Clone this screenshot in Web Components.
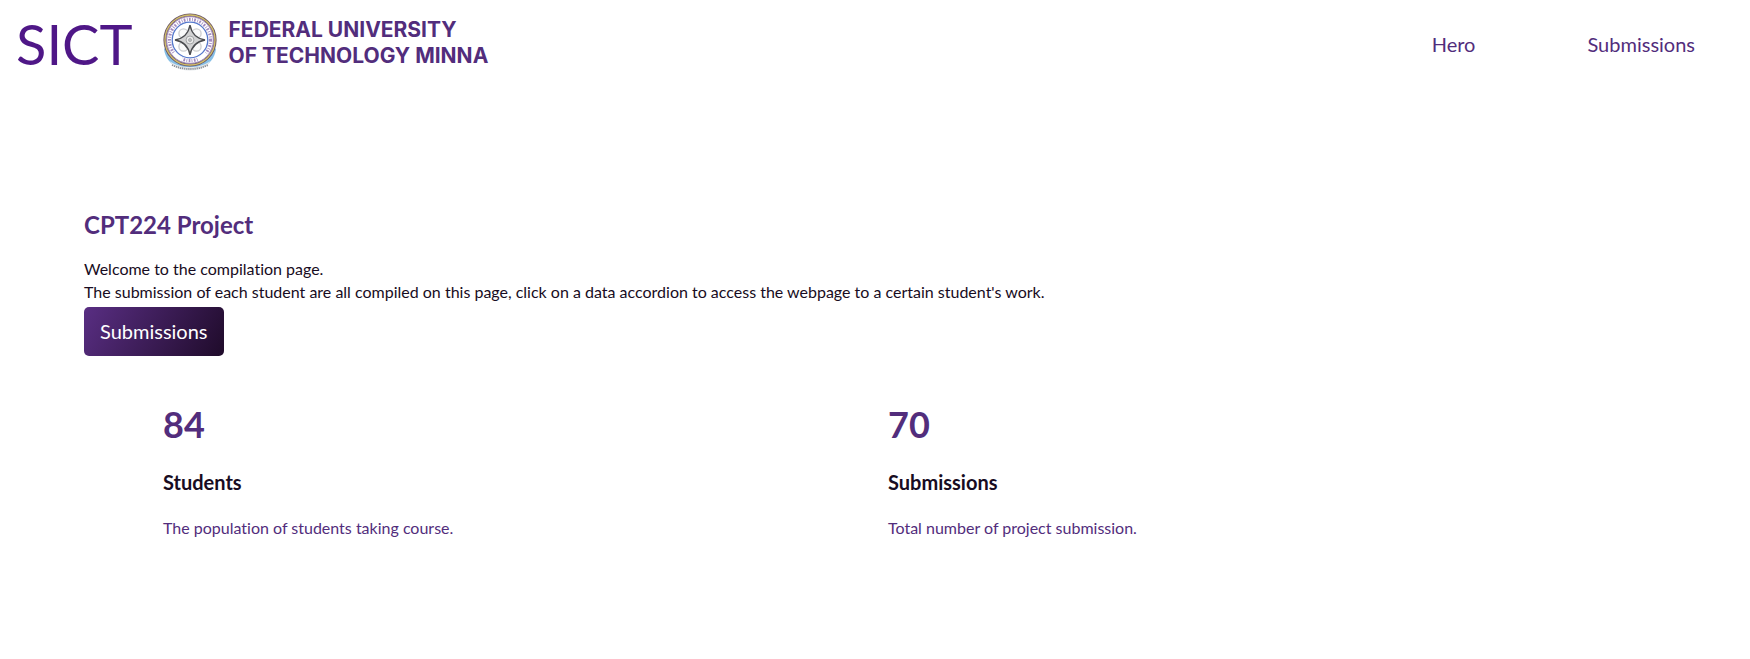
<!DOCTYPE html>
<html lang="en">
<head>
<meta charset="utf-8">
<meta name="viewport" content="width=device-width, initial-scale=1">
<title>CPT224 Project</title>
<style>
  :root {
    --purple: #522d7c;
    --purple-deep: #4f1787;
    --ink: #180c22;
  }
  body {
    margin: 0;
    background: #fff;
    color: var(--ink);
    font-family: Lato, "Open Sans", sans-serif;
    font-size: 16px;
    line-height: 24px;
    font-variant-ligatures: none;
  }
</style>
</head>
<body>
<site-header>
  <university-logo slot="brand"></university-logo>
  <nav-link href="#hero">Hero</nav-link>
  <nav-link href="#submissions">Submissions</nav-link>
</site-header>
<main>
  <hero-section id="hero">
    <span slot="title">CPT224 Project</span>
    <span slot="lead">Welcome to the compilation page.<br>The submission of each student are all compiled on this page, click on a data accordion to access the webpage to a certain student's work.</span>
    <span slot="action">Submissions</span>
  </hero-section>
  <stat-list id="submissions">
    <stat-card value="84" label="Students">The population of students taking course.</stat-card>
    <stat-card value="70" label="Submissions">Total number of project submission.</stat-card>
  </stat-list>
</main>

<script>
  function define(name, html, setup) {
    const template = document.createElement('template');
    template.innerHTML = html;
    customElements.define(name, class extends HTMLElement {
      connectedCallback() {
        if (this.shadowRoot) return;
        const root = this.attachShadow({ mode: 'open' });
        root.append(template.content.cloneNode(true));
        if (setup) setup(this, root);
      }
    });
  }

  define('site-header', `
    <style>
      :host { display: block; }
      header { display: flex; align-items: center; padding: 8px 55px 8px 16px; }
      .name { color: var(--purple-deep); font-size: 56px; line-height: 72px; text-decoration: none; margin-right: 30px; }
      nav { display: flex; gap: 112px; margin-left: auto; }
    </style>
    <header>
      <a class="name" href="#">SICT</a>
      <slot name="brand"></slot>
      <nav><slot></slot></nav>
    </header>`);

  define('nav-link', `
    <style>
      :host { display: block; }
      a { color: var(--purple); font-size: 20px; line-height: 30px; text-decoration: none; }
    </style>
    <a><slot></slot></a>`,
    (host, root) => { root.querySelector('a').href = host.getAttribute('href'); });

  define('university-seal', `
    <style>
      :host { display: block; flex: none; }
      svg { display: block; width: 54px; height: 58px; }
    </style>
    <svg viewBox="1 1 54 58" aria-hidden="true">
      <path d="M2 37C3 46 9 53 17 56L39 56C47 53 53 46 54 37L49 32L7 32Z" fill="#86bfe6"/>
      <path d="M8 49C18 57 38 57 48 49L45 54C36 60 20 60 11 54Z" fill="#e3e7ea"/>
      <path d="M10 53Q28 61 46 53" fill="none" stroke="#8d9095" stroke-width="1.8" stroke-dasharray="1.2 .9"/>
      <circle cx="28" cy="28" r="25.2" fill="#fff" stroke="#6d5666" stroke-width="2.8"/>
      <circle cx="28" cy="28" r="25" fill="none" stroke="#d0be6a" stroke-width="1.3"/>
      <circle cx="28" cy="28" r="23.4" fill="none" stroke="#7d609e" stroke-width=".8"/>
      <circle cx="28" cy="28" r="20.6" fill="none" stroke="#8d6fb0" stroke-width="3.2" stroke-dasharray="1.700 1.500 .8 1.300" stroke-opacity=".8"/>
      <path d="M12 41A21 21 0 0 0 20 47.500M36 47.500A21 21 0 0 0 44 41" fill="none" stroke="#fff" stroke-width="4"/>
      <circle cx="28" cy="28" r="17.8" fill="#fff" stroke="#5578cc" stroke-width="1.3"/>
      <g fill="#fafafa" stroke="#cfd0d2" stroke-width="1.4">
        <circle cx="21.5" cy="21.5" r="4.6"/><circle cx="34.5" cy="21.5" r="4.6"/>
        <circle cx="21.5" cy="34.5" r="4.6"/><circle cx="34.5" cy="34.5" r="4.6"/>
      </g>
      <path d="M28 13C29.500 21.500 34.500 26.500 43 28C34.500 29.500 29.500 34.500 28 43C26.500 34.500 21.500 29.500 13 28C21.500 26.500 26.500 21.500 28 13Z" fill="#d2d2d3" stroke="#4a4b4f" stroke-width="1.4"/>
      <circle cx="28" cy="28" r="4" fill="#e8e8e8" stroke="#a5a6a8" stroke-width="1"/>
      <circle cx="28" cy="28" r="1.500" fill="#c2c3c5" stroke="#8d8e90" stroke-width=".6"/>
    </svg>`);

  define('university-logo', `
    <style>
      :host { display: flex; align-items: center; gap: 12px; padding-bottom: 4px; }
      p { margin: 0; padding-top: 2px; color: var(--purple); font: 700 21px/26px Inter, sans-serif; white-space: nowrap; }
    </style>
    <university-seal></university-seal>
    <p>FEDERAL UNIVERSITY<br>OF TECHNOLOGY MINNA</p>`);

  define('hero-section', `
    <style>
      :host { display: block; padding: 121px 84px 0; }
      h1 { margin: 0 0 16px; color: var(--purple); font-size: 24px; line-height: 32px; font-weight: 700; }
      p { margin: 0 0 4px; line-height: 23px; }
      button {
        display: block; border: 0; border-radius: 5px; padding: 10px 16px; cursor: pointer;
        color: #fff; font: inherit; font-size: 20px; line-height: 29px;
        background: linear-gradient(120deg, #592e83, #1f0b2a);
      }
    </style>
    <section>
      <h1><slot name="title"></slot></h1>
      <p><slot name="lead"></slot></p>
      <button type="button"><slot name="action"></slot></button>
    </section>`,
    (host, root) => {
      root.querySelector('button').addEventListener('click', () =>
        document.getElementById('submissions').scrollIntoView({ behavior: 'smooth' }));
    });

  define('stat-list', `
    <style>
      :host { display: grid; grid-template-columns: 1fr 1fr; padding: 44px 137px 120px 163px; }
    </style>
    <slot></slot>`);

  define('stat-card', `
    <style>
      :host { display: block; }
      h2 { margin: 0 0 20px; color: var(--purple); font-size: 36px; line-height: 48px; font-weight: 700; }
      h3 { margin: 0 0 20px; color: var(--ink); font-size: 20px; line-height: 28px; font-weight: 700; }
      p { margin: 0; color: var(--purple); }
    </style>
    <h2></h2>
    <h3></h3>
    <p><slot></slot></p>`,
    (host, root) => {
      root.querySelector('h2').textContent = host.getAttribute('value');
      root.querySelector('h3').textContent = host.getAttribute('label');
    });
</script>
</body>
</html>
